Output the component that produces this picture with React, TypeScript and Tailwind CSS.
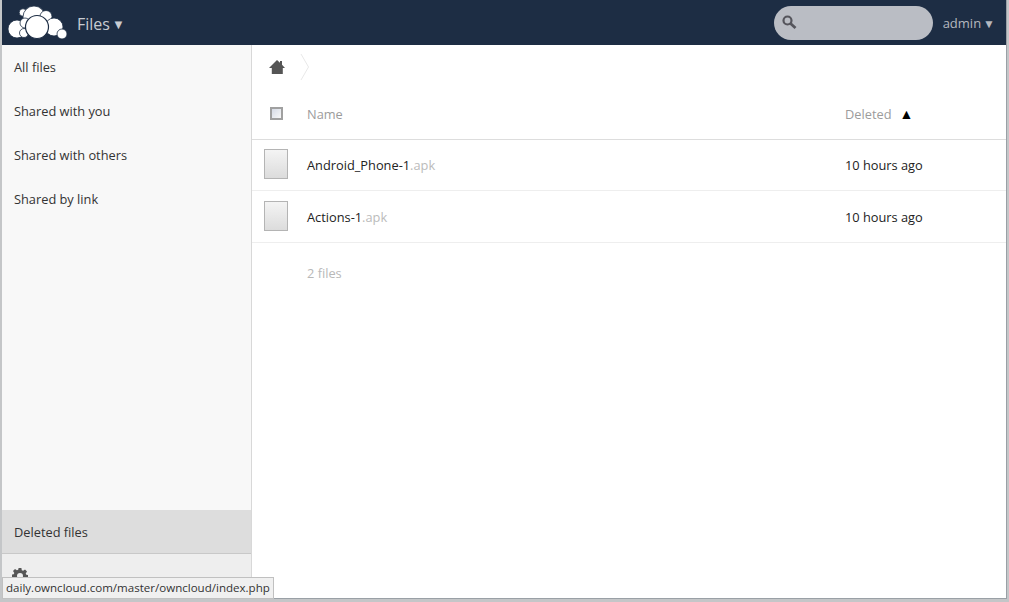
const navItems = ['All files', 'Shared with you', 'Shared with others', 'Shared by link'];

const files = [
  { name: 'Android_Phone-1', ext: '.apk', deleted: '10 hours ago', height: 'h-[51px]', textPad: 'pt-[1px]' },
  { name: 'Actions-1', ext: '.apk', deleted: '10 hours ago', height: 'h-[52px]', textPad: 'pt-[3px]' },
];

function CloudLogo() {
  return (
    <svg width="62" height="40" viewBox="0 0 62 40" className="block">
      <g fill="#ffffff" stroke="#1d2d44" strokeWidth="0.8">
        <circle cx="16" cy="9.500" r="3.800" />
        <circle cx="27" cy="14" r="11" />
        <circle cx="39" cy="13.500" r="6" />
        <circle cx="10" cy="26" r="9" />
        <circle cx="47" cy="24" r="9" />
        <circle cx="55" cy="31" r="5" />
        <circle cx="17" cy="30" r="4.500" />
        <circle cx="18" cy="20" r="5" />
        <circle cx="30" cy="24" r="11.500" strokeWidth="1.200" />
      </g>
    </svg>
  );
}

function Gear() {
  return (
    <svg width="16" height="16" viewBox="0 0 16 16" fill="#555555">
      <path d="M6.600 0h2.800l.4 2.200 1.300.6 1.900-1.300 2 2-1.300 1.900.6 1.300 2.200.4v2.800l-2.200.4-.6 1.300 1.300 1.900-2 2-1.900-1.300-1.300.6-.4 2.200H6.600l-.4-2.200-1.300-.6-1.900 1.300-2-2 1.300-1.900-.6-1.300L-.5 9.400V6.600l2.200-.4.6-1.300L1 3l2-2 1.900 1.300 1.300-.6zM8 5a3 3 0 1 0 0 6 3 3 0 0 0 0-6z" fillRule="evenodd" />
    </svg>
  );
}

function FileIcon() {
  return (
    <div className="w-6 h-[30px] border border-[#b4b4b4] bg-gradient-to-b from-[#f4f4f4] to-[#dcdcdc]" />
  );
}

export default function App() {
  return (
    <div className="relative w-[1009px] h-[602px] overflow-hidden bg-[#c4c6c8] pl-[2px] pr-[2px] pb-[3px] font-['Open_Sans',sans-serif] text-[12.8px]">
      <div className="flex flex-col h-full bg-white border-r border-b border-[#9aa0a6]">
        <header className="h-[45px] shrink-0 flex items-center bg-[#1d2d44]">
          <div className="ml-[5px]">
            <CloudLogo />
          </div>
          <div className="ml-[8px] pt-[3px] flex items-center text-[16px] text-[#c8ccd2]">
            Files
            <span className="ml-[2px] text-[13px] leading-none">▼</span>
          </div>
          <div className="ml-auto w-[159px] h-[34px] rounded-[17px] bg-[#babdc4] flex items-center pl-[8px]">
            <svg width="15" height="15" viewBox="0 0 15 15" fill="none" stroke="#55555c">
              <circle cx="5.500" cy="5.500" r="4" strokeWidth="2.200" />
              <path d="M8.500 8.500l5 4.500" strokeWidth="2.800" />
            </svg>
          </div>
          <div className="ml-[10px] mr-[11px] pt-[3px] flex items-center text-[13px] text-[#b4b8bf]">
            admin
            <span className="ml-[2px] text-[12px] leading-none">▼</span>
          </div>
        </header>

        <div className="flex flex-1 min-h-0">
          <aside className="w-[250px] shrink-0 flex flex-col bg-[#f8f8f8] border-r border-[#d8d8d8] text-[#333333]">
            <nav className="flex-1">
              {navItems.map((item) => (
                <div key={item} className="h-[44px] flex items-center pl-3 pt-[2px]">
                  {item}
                </div>
              ))}
            </nav>
            <div className="h-[44px] flex items-center pl-3 pt-[2px] bg-[#dddddd] border-b border-[#c8c8c8]">
              Deleted files
            </div>
            <div className="h-[44px] bg-[#eeeeee] pl-[10px] pt-[14px]">
              <Gear />
            </div>
          </aside>

          <main className="flex-1 min-w-0 bg-white text-[#222222]">
            <div className="h-[44px] flex items-center pl-[17px]">
              <svg width="16" height="14" viewBox="0 0 16 14" fill="#555555">
                <path d="M8 0l3 2.700V1h2v3.700L16 8H13.800v6H2.800V8H0z" />
              </svg>
              <svg width="10" height="26" viewBox="0 0 10 26" fill="none" stroke="#e8e8e8" className="ml-[15px]">
                <path d="M1 0l7.500 13L1 26" />
              </svg>
            </div>
            <div className="h-[51px] flex items-center border-b border-[#dddddd] text-[#9c9c9c]">
              <div className="w-[55px] pl-[18px] pb-[2px]">
                <div className="w-[13px] h-[13px] border-2 border-[#a0a0a0] bg-gradient-to-br from-[#d6dbe6] to-[#f8f8f8]" />
              </div>
              <div className="flex-1 pt-[2px]">Name</div>
              <div className="w-[161px] pt-[2px] flex items-center">
                Deleted
                <span className="ml-[8px] mb-[2px] text-[14px] leading-none text-black">▲</span>
              </div>
            </div>
            {files.map((file) => (
              <div key={file.name} className={`${file.height} flex items-center border-b border-[#eeeeee]`}>
                <div className="w-[55px] pl-[12px] pb-[2px]">
                  <FileIcon />
                </div>
                <div className={`flex-1 ${file.textPad}`}>
                  {file.name}
                  <span className="text-[#bbbbbb]">{file.ext}</span>
                </div>
                <div className={`w-[161px] ${file.textPad}`}>{file.deleted}</div>
              </div>
            ))}
            <div className="pl-[55px] pt-[21px] text-[#b8b8b8]">2 files</div>
          </main>
        </div>
      </div>

      {/* status bubble at the bottom, sits over the sidebar */}
      <div className="absolute left-[2px] top-[577px] h-[22px] flex items-center px-[3px] bg-[#f0f0f0] border border-[#c0c0c0] text-[11.55px] text-[#333333]">
        daily.owncloud.com/master/owncloud/index.php
      </div>
    </div>
  );
}
